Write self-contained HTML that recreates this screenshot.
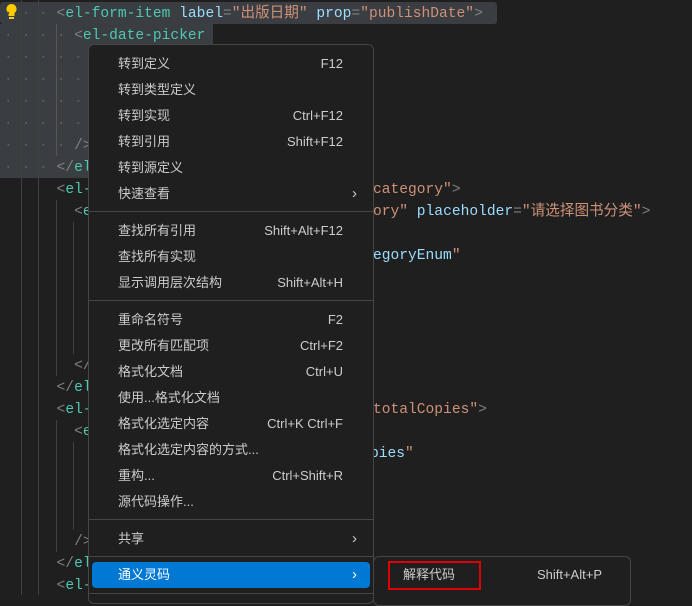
<!DOCTYPE html>
<html><head><meta charset="utf-8"><style>
*{margin:0;padding:0;box-sizing:border-box}
body{width:692px;height:595px;background:#1f1f1f;overflow:hidden;position:relative;font-family:"Liberation Mono","Noto Sans CJK SC",monospace;font-size:14.6px}
.sel{position:absolute;background:#3a3d41;border-radius:3px}
.ln{position:absolute;white-space:pre;line-height:22px;height:22px}
.g{position:absolute;width:1px;background:#404040}
.p{color:#808080}.t{color:#4ec9b0}.a{color:#9cdcfe}.s{color:#ce9178}
.dot{color:#5a5a5a}
.menu{position:absolute;left:88px;top:44px;width:286px;height:560px;background:#1f1f1f;border:1px solid #454545;border-radius:6px;font-family:"Liberation Sans","Noto Sans CJK SC",sans-serif;font-size:13px;color:#cccccc}
.it{position:absolute;left:0;width:284px;height:26px;line-height:26px;padding-left:29px}
.it .k{position:absolute;right:30px;top:0;color:#cccccc}
.sep{position:absolute;left:0;width:284px;height:1px;background:#454545}
.arr{position:absolute;right:16px;top:0;font-size:15px;color:#cccccc}
</style></head><body>
<div class="sel" style="left:0;top:2px;width:497px;height:22px"></div>
<div class="sel" style="left:0;top:24px;width:213px;height:22px;border-radius:0"></div>
<div class="sel" style="left:0;top:46px;width:100px;height:132px;border-radius:0"></div>
<div class="g" style="left:21px;top:0;height:595px"></div>
<div class="g" style="left:38px;top:0;height:595px"></div>
<div class="g" style="left:56px;top:24px;height:132px;background:#555"></div>
<div class="g" style="left:56px;top:200px;height:176px"></div>
<div class="g" style="left:73px;top:222px;height:132px"></div>
<div class="g" style="left:56px;top:420px;height:132px"></div>
<div class="g" style="left:73px;top:442px;height:88px"></div>
<svg style="position:absolute;left:5px;top:3px" width="13" height="17" viewBox="0 0 13 17"><path d="M6.5 1a5 5 0 0 0-3 9v3h6v-3a5 5 0 0 0-3-9z" fill="#ffcc00"/><rect x="4" y="14" width="5" height="2" fill="#ffcc00"/></svg>
<div class="ln" style="left:4px;top:3px"><span class="dot">· · · </span><span class="p">&lt;</span><span class="t">el-form-item</span> <span class="a">label</span><span class="p">=</span><span class="s">"出版日期"</span> <span class="a">prop</span><span class="p">=</span><span class="s">"publishDate"</span><span class="p">&gt;</span></div>
<div class="ln" style="left:4px;top:25px"><span class="dot">· · · · </span><span class="p">&lt;</span><span class="t">el-date-picker</span></div>
<div class="ln" style="left:4px;top:47px"><span class="dot">· · · · · </span></div>
<div class="ln" style="left:4px;top:69px"><span class="dot">· · · · · </span></div>
<div class="ln" style="left:4px;top:91px"><span class="dot">· · · · · </span></div>
<div class="ln" style="left:4px;top:113px"><span class="dot">· · · · · </span></div>
<div class="ln" style="left:4px;top:135px"><span class="dot">· · · · </span><span class="p">/&gt;</span></div>
<div class="ln" style="left:4px;top:157px"><span class="dot">· · · </span><span class="p">&lt;/</span><span class="t">el</span></div>
<div class="ln" style="left:4px;top:179px">      <span class="p">&lt;</span><span class="t">el-</span></div>
<div class="ln" style="left:373px;top:179px"><span class="s">category"</span><span class="p">&gt;</span></div>
<div class="ln" style="left:4px;top:201px">        <span class="p">&lt;</span><span class="t">e</span></div>
<div class="ln" style="left:373px;top:201px"><span class="s">ory"</span> <span class="a">placeholder</span><span class="p">=</span><span class="s">"请选择图书分类"</span><span class="p">&gt;</span></div>
<div class="ln" style="left:373px;top:245px"><span class="a">egoryEnum</span><span class="s">"</span></div>
<div class="ln" style="left:4px;top:355px">        <span class="p">&lt;/</span></div>
<div class="ln" style="left:4px;top:377px">      <span class="p">&lt;/</span><span class="t">el</span></div>
<div class="ln" style="left:4px;top:399px">      <span class="p">&lt;</span><span class="t">el-</span></div>
<div class="ln" style="left:373px;top:399px"><span class="s">totalCopies"</span><span class="p">&gt;</span></div>
<div class="ln" style="left:4px;top:421px">        <span class="p">&lt;</span><span class="t">e</span></div>
<div class="ln" style="left:370px;top:443px"><span class="a">pies</span><span class="s">"</span></div>
<div class="ln" style="left:4px;top:531px">        <span class="p">/&gt;</span></div>
<div class="ln" style="left:4px;top:553px">      <span class="p">&lt;/</span><span class="t">el</span></div>
<div class="ln" style="left:4px;top:575px">      <span class="p">&lt;</span><span class="t">el-</span></div>

<div class="menu">
<div class="it" style="top:6px">转到定义<span class="k">F12</span></div>
<div class="it" style="top:32px">转到类型定义</div>
<div class="it" style="top:58px">转到实现<span class="k">Ctrl+F12</span></div>
<div class="it" style="top:84px">转到引用<span class="k">Shift+F12</span></div>
<div class="it" style="top:110px">转到源定义</div>
<div class="it" style="top:136px">快速查看<span class="arr">›</span></div>
<div class="sep" style="top:166px"></div>
<div class="it" style="top:173px">查找所有引用<span class="k">Shift+Alt+F12</span></div>
<div class="it" style="top:199px">查找所有实现</div>
<div class="it" style="top:225px">显示调用层次结构<span class="k">Shift+Alt+H</span></div>
<div class="sep" style="top:255px"></div>
<div class="it" style="top:262px">重命名符号<span class="k">F2</span></div>
<div class="it" style="top:288px">更改所有匹配项<span class="k">Ctrl+F2</span></div>
<div class="it" style="top:314px">格式化文档<span class="k">Ctrl+U</span></div>
<div class="it" style="top:340px">使用...格式化文档</div>
<div class="it" style="top:366px">格式化选定内容<span class="k">Ctrl+K Ctrl+F</span></div>
<div class="it" style="top:392px">格式化选定内容的方式...</div>
<div class="it" style="top:418px">重构...<span class="k">Ctrl+Shift+R</span></div>
<div class="it" style="top:444px">源代码操作...</div>
<div class="sep" style="top:474px"></div>
<div class="it" style="top:481px">共享<span class="arr">›</span></div>
<div class="sep" style="top:511px"></div>
<div style="position:absolute;left:3px;top:517px;width:278px;height:26px;background:#0078d4;border-radius:4px"></div>
<div class="it" style="top:517px;color:#fff">通义灵码<span class="arr" style="color:#fff">›</span></div>
<div class="sep" style="top:548px"></div>
</div>
<div style="position:absolute;left:373px;top:556px;width:258px;height:50px;background:#1f1f1f;border:1px solid #454545;border-radius:6px;font-family:'Liberation Sans','Noto Sans CJK SC',sans-serif;font-size:13px;color:#cccccc">
<div style="position:absolute;left:29px;top:5px;line-height:26px">解释代码</div>
<div style="position:absolute;right:28px;top:5px;line-height:26px">Shift+Alt+P</div>
</div>
<div style="position:absolute;left:388px;top:561px;width:93px;height:29px;border:2px solid #e00000"></div>
</body></html>
